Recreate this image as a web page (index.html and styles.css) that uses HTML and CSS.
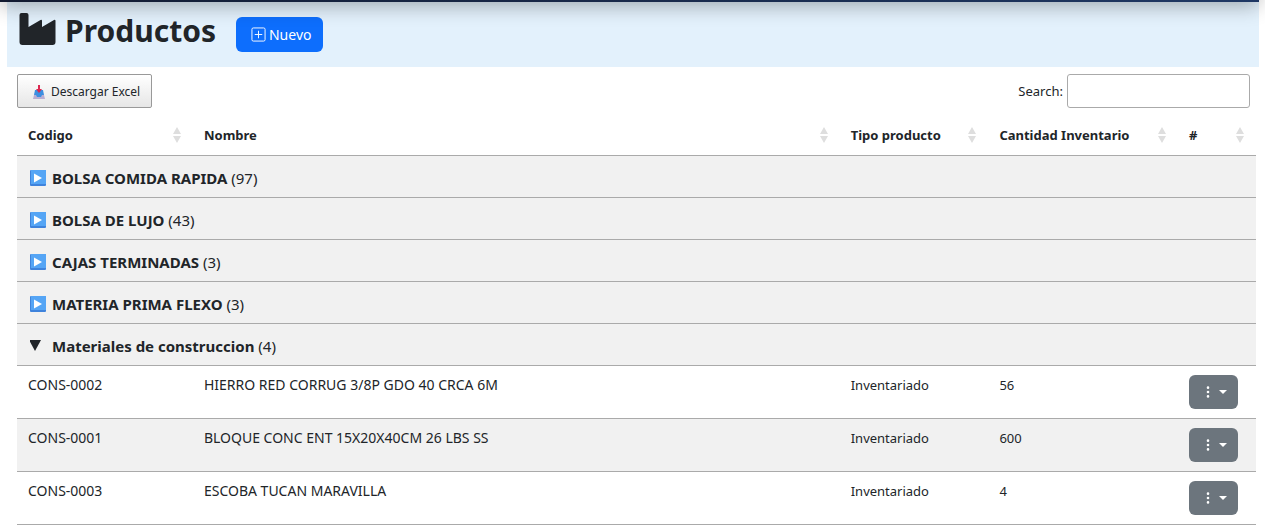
FILE: index.html
```html
<!DOCTYPE html>
<html lang="es">
<head>
    <meta charset="UTF-8">
    <meta name="viewport" content="width=device-width, initial-scale=1.0">
    <title>Productos</title>
    <link rel="stylesheet" href="styles.css">
</head>
<body>
    <svg class="sprite" aria-hidden="true">
        <symbol id="play" viewBox="0 0 16 16">
            <rect width="16" height="16" rx="1" fill="#3f83dc"/>
            <rect x="1" y="0" width="15" height="14" fill="#55a5f5"/>
            <path d="M4 3.500v9l8-4.500z" fill="#fff"/>
        </symbol>
        <symbol id="down" viewBox="0 0 16 16">
            <path d="M-1 2h12L5 13z" fill="#212529"/>
        </symbol>
        <symbol id="sort" viewBox="0 0 8 16">
            <path d="M4 0l4 7H0zM0 9h8l-4 7z" fill="#dedede"/>
        </symbol>
        <symbol id="dots" viewBox="0 0 16 16">
            <path d="M9.500 13a1.500 1.500 0 1 1-3 0 1.500 1.500 0 0 1 3 0m0-5a1.500 1.500 0 1 1-3 0 1.500 1.500 0 0 1 3 0m0-5a1.500 1.500 0 1 1-3 0 1.500 1.500 0 0 1 3 0" fill="#fff"/>
        </symbol>
    </svg>

    <div class="navbar"></div>
    <main class="page">
        <header class="page-header">
            <svg class="industry" viewBox="0 0 36 32" aria-hidden="true">
                <path d="M2 0h5q2 0 2 2v12l12-7q1.500-.8 1.500 1v6l12-7q1.500-.8 1.500 1v21q0 3-3 3H3q-3 0-3-3V2q0-2 2-2z" fill="#212529"/>
            </svg>
            <h1>Productos</h1>
            <button type="button" class="btn btn-primary">
                <svg class="plus" viewBox="0 0 16 16" fill="none" stroke="#fff" aria-hidden="true">
                    <rect x="1" y="1" width="14" height="14" rx="1.500"/>
                    <path d="M8 4v8M4 8h8"/>
                </svg>
                Nuevo
            </button>
        </header>

        <div class="content">
            <div class="toolbar">
                <button type="button" class="excel-button">
                    <svg class="inbox" viewBox="0 0 12 14" aria-hidden="true">
                        <path d="M1 10l1-5h8l1 5v3H1z" fill="#3d8ee0"/>
                        <path d="M1 10h2l1 2h4l1-2h2l1 4H0z" fill="#b9aed3"/>
                        <path d="M5 0h2v4h2L6 8 3 4h2z" fill="#dc2850"/>
                    </svg>
                    Descargar Excel
                </button>
                <div class="search">
                    <label for="search">Search:</label>
                    <input type="search" id="search">
                </div>
            </div>

            <table>
                <thead>
                    <tr>
                        <th class="col-codigo"><div class="head">Codigo<svg class="sort"><use href="#sort"/></svg></div></th>
                        <th class="col-nombre"><div class="head">Nombre<svg class="sort"><use href="#sort"/></svg></div></th>
                        <th class="col-tipo"><div class="head">Tipo producto<svg class="sort"><use href="#sort"/></svg></div></th>
                        <th class="col-cantidad"><div class="head">Cantidad Inventario<svg class="sort"><use href="#sort"/></svg></div></th>
                        <th class="col-acciones"><div class="head">#<svg class="sort"><use href="#sort"/></svg></div></th>
                    </tr>
                </thead>
                <tbody>
                    <tr class="group">
                        <td colspan="5"><button type="button" class="group-button"><svg class="toggle"><use href="#play"/></svg><span><strong>BOLSA COMIDA RAPIDA</strong> (97)</span></button></td>
                    </tr>
                    <tr class="group">
                        <td colspan="5"><button type="button" class="group-button"><svg class="toggle"><use href="#play"/></svg><span><strong>BOLSA DE LUJO</strong> (43)</span></button></td>
                    </tr>
                    <tr class="group">
                        <td colspan="5"><button type="button" class="group-button"><svg class="toggle"><use href="#play"/></svg><span><strong>CAJAS TERMINADAS</strong> (3)</span></button></td>
                    </tr>
                    <tr class="group">
                        <td colspan="5"><button type="button" class="group-button"><svg class="toggle"><use href="#play"/></svg><span><strong>MATERIA PRIMA FLEXO</strong> (3)</span></button></td>
                    </tr>
                    <tr class="group">
                        <td colspan="5"><button type="button" class="group-button"><svg class="toggle"><use href="#down"/></svg><span><strong>Materiales de construccion</strong> (4)</span></button></td>
                    </tr>
                    <tr class="item">
                        <td class="name">CONS-0002</td>
                        <td class="name">HIERRO RED CORRUG 3/8P GDO 40 CRCA 6M</td>
                        <td>Inventariado</td>
                        <td>56</td>
                        <td><button type="button" class="btn btn-secondary" aria-label="Acciones"><svg class="dots"><use href="#dots"/></svg><span class="caret"></span></button></td>
                    </tr>
                    <tr class="item striped">
                        <td class="name">CONS-0001</td>
                        <td class="name">BLOQUE CONC ENT 15X20X40CM 26 LBS SS</td>
                        <td>Inventariado</td>
                        <td>600</td>
                        <td><button type="button" class="btn btn-secondary" aria-label="Acciones"><svg class="dots"><use href="#dots"/></svg><span class="caret"></span></button></td>
                    </tr>
                    <tr class="item">
                        <td class="name">CONS-0003</td>
                        <td class="name">ESCOBA TUCAN MARAVILLA</td>
                        <td>Inventariado</td>
                        <td>4</td>
                        <td><button type="button" class="btn btn-secondary" aria-label="Acciones"><svg class="dots"><use href="#dots"/></svg><span class="caret"></span></button></td>
                    </tr>
                </tbody>
            </table>
        </div>
    </main>
</body>
</html>
```

FILE: styles.css
```css
* {
    box-sizing: border-box;
}
body {
    font-family: "Segoe UI", "Noto Sans", sans-serif;
    font-size: 13px;
    line-height: 20px;
    color: #212529;
    background: #fff;
    margin: 0;
    padding-right: 6px;
}
.sprite {
    display: none;
}
button, input {
    font: inherit;
}
.navbar {
    height: 60px;
    margin-top: -58px;
    background: linear-gradient(90deg, #121a30, #1f3864);
    box-shadow: 0 4px 20px rgba(0, 0, 0, 0.3);
    position: relative;
}
.page {
    padding-left: 7px;
}
.page-header {
    display: flex;
    align-items: center;
    height: 65px;
    padding: 0 12px 8px;
    background: #e3f1fc;
}
.industry {
    width: 37px;
    height: 32px;
    margin: 0 9px 4px 0;
}
h1 {
    font-size: 30px;
    line-height: 36px;
    font-weight: 700;
    margin: 0 20px 0 0;
}
.btn {
    display: flex;
    align-items: center;
    justify-content: center;
    border: none;
    border-radius: 6px;
    color: #fff;
    cursor: pointer;
}
.btn-primary {
    gap: 3px;
    height: 35px;
    padding: 0 12px 0 15px;
    margin-top: 8px;
    font-size: 14px;
    background: #0d6efd;
}
.plus {
    width: 15px;
    height: 15px;
}
.content {
    padding: 7px 3px 0 10px;
}
.toolbar {
    display: flex;
    justify-content: space-between;
    padding-right: 6px;
}
.excel-button {
    display: flex;
    align-items: center;
    gap: 6px;
    height: 34px;
    padding: 2px 11px 0 15px;
    font-size: 12px;
    color: #212529;
    border: 1px solid #999;
    border-radius: 2px;
    background: linear-gradient(#fff, #e6e6e6);
    cursor: pointer;
}
.inbox {
    width: 12px;
    height: 14px;
}
.search {
    display: flex;
    align-items: center;
    gap: 4px;
}
.search input {
    width: 183px;
    height: 34px;
    border: 1px solid #aaa;
    border-radius: 3px;
    padding: 4px;
    background: transparent;
}
table {
    width: 100%;
    table-layout: fixed;
    border-collapse: collapse;
}
.col-codigo {
    width: 14.2%;
}
.col-nombre {
    width: 52.2%;
}
.col-tipo {
    width: 12%;
}
.col-cantidad {
    width: 15.3%;
}
.col-acciones {
    width: 6.3%;
}
tr {
    border-bottom: 1px solid #aaa;
}
th {
    height: 47px;
    padding: 7px 12px 0 11px;
    text-align: left;
    white-space: nowrap;
}
.head {
    display: flex;
    justify-content: space-between;
    align-items: center;
}
.sort {
    width: 8px;
    height: 16px;
}
td {
    padding: 9px 11px;
    vertical-align: top;
}
.name {
    font-size: 14px;
}
.group, .striped {
    background: #f1f1f1;
}
.group td {
    height: 42px;
    padding: 0 13px;
    vertical-align: middle;
}
.group-button {
    display: flex;
    align-items: center;
    gap: 6px;
    width: 100%;
    padding: 3px 0 0;
    border: none;
    background: none;
    font-size: 15px;
    color: #212529;
    text-align: left;
    cursor: pointer;
}
.toggle {
    width: 16px;
    height: 16px;
}
.item td {
    height: 53px;
}
.btn-secondary {
    width: 49px;
    height: 34px;
    gap: 3px;
    padding: 0;
    background: #6c757d;
}
.dots {
    width: 16px;
    height: 14px;
}
.caret {
    border-top: 4px solid #fff;
    border-left: 4px solid transparent;
    border-right: 4px solid transparent;
}
```
